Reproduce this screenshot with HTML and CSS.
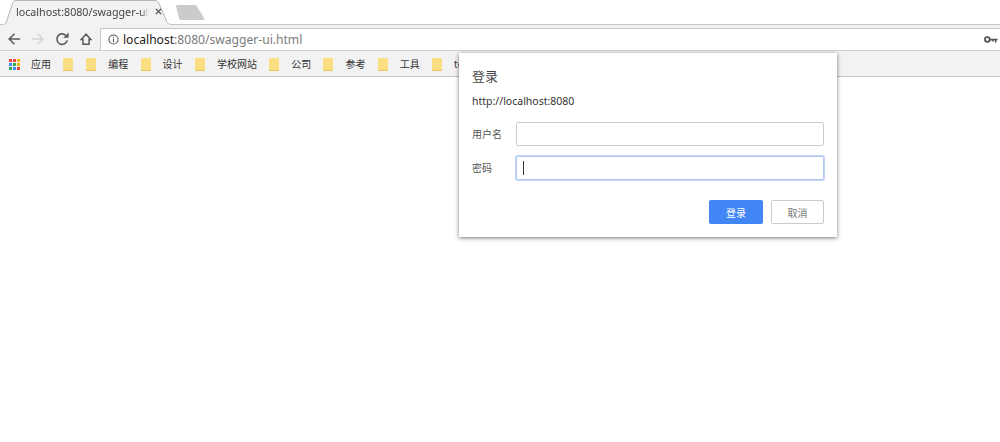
FILE: index.html
```html
<!DOCTYPE html>
<html lang="zh">
<head>
<meta charset="utf-8">
<title>localhost:8080/swagger-ui.html</title>
<link rel="stylesheet" href="styles.css">
</head>
<body>
<header class="chrome">
  <div class="tabstrip">
    <div class="tab">
      <svg class="tab-shape" width="176" height="26" viewBox="0 0 176 26"><path d="M0 24.500H3.500C5.500 24.500 6 23 7 20L12.500 3.500C13 1.500 14 .5 16 .5H155C157 .5 158 1.500 159 3.500L166.500 21C167.500 23.500 169 24.500 171 24.500H176V26H0Z" fill="#f2f2f2" stroke="#b5b5b5" stroke-width="1"/><path d="M0 25.500H176" stroke="#f2f2f2" stroke-width="1.500"/></svg>
      <span class="tab-title">localhost:8080/swagger-ui.html</span>
      <svg class="tab-close" width="7" height="7" viewBox="0 0 8 8"><path d="M1 1L7 7M7 1L1 7" stroke="#555" stroke-width="1.600"/></svg>
    </div>
    <svg class="newtab" width="30" height="15" viewBox="0 0 30 15"><path d="M1 1.500C1 .5 1.500 0 2.500 0H20C21 0 21.500 .5 22 1.500L29 13C29.500 14 29 15 28 15H6C5 15 4.500 14.500 4.200 13.500Z" fill="#cbcbcb"/></svg>
  </div>
  <div class="toolbar">
    <svg class="nav-icon nav-back" width="14" height="14" viewBox="0 0 16 16"><path d="M15 8H3M8.500 2L2.500 8L8.500 14" fill="none" stroke="#5a5a5a" stroke-width="1.800"/></svg>
    <svg class="nav-icon nav-forward" width="14" height="14" viewBox="0 0 16 16"><path d="M1 8H13M7.500 2L13.500 8L7.500 14" fill="none" stroke="#d4d4d4" stroke-width="1.800"/></svg>
    <svg class="nav-icon nav-reload" width="14" height="14" viewBox="0 0 16 16"><path d="M14 9.500A6 6 0 1 1 12.300 3.800" fill="none" stroke="#5a5a5a" stroke-width="1.800"/><path d="M9.500 6.500H15.500V.5Z" fill="#5a5a5a"/></svg>
    <svg class="nav-icon nav-home" width="14" height="14" viewBox="0 0 16 16"><path d="M8 2.500L2.500 8.500H4.500V14H11.500V8.500H13.500Z" fill="none" stroke="#5a5a5a" stroke-width="1.700"/></svg>
    <div class="omnibox">
      <svg class="info" width="11" height="11" viewBox="0 0 12 12"><circle cx="6" cy="6" r="5" fill="none" stroke="#555" stroke-width="1.100"/><path d="M6 5.200V9M6 3V4.200" stroke="#555" stroke-width="1.200"/></svg>
      <span class="url"><span class="host">localhost</span>:8080/swagger-ui.html</span>
      <svg class="key" width="14" height="8" viewBox="0 0 16 9"><circle cx="3.800" cy="4" r="2.700" fill="none" stroke="#555" stroke-width="2"/><path d="M6 3H15.500V5H14V7.500H12.500V5H11V6.500H9.500V5H6Z" fill="#555"/></svg>
    </div>
  </div>
  <nav class="bookmarks">
    <svg class="apps" width="11" height="11" viewBox="0 0 11 11">
      <rect x="0" y="0" width="3" height="3" fill="#e8453c"/><rect x="4" y="0" width="3" height="3" fill="#e8453c"/><rect x="8" y="0" width="3" height="3" fill="#f4b400"/>
      <rect x="0" y="4" width="3" height="3" fill="#4285f4"/><rect x="4" y="4" width="3" height="3" fill="#34a853"/><rect x="8" y="4" width="3" height="3" fill="#f4b400"/>
      <rect x="0" y="8" width="3" height="3" fill="#34a853"/><rect x="4" y="8" width="3" height="3" fill="#4285f4"/><rect x="8" y="8" width="3" height="3" fill="#e8453c"/>
    </svg>
    <span class="bm-label bm-apps">应用</span>
    <span class="folder"></span>
    <span class="folder folder-tight"></span><span class="bm-label">编程</span>
    <span class="folder"></span><span class="bm-label">设计</span>
    <span class="folder"></span><span class="bm-label">学校网站</span>
    <span class="folder"></span><span class="bm-label">公司</span>
    <span class="folder"></span><span class="bm-label">参考</span>
    <span class="folder"></span><span class="bm-label">工具</span>
    <span class="folder"></span><span class="bm-label">test</span>
  </nav>
</header>
<main class="page"></main>
<section class="dialog">
  <h1 class="dialog-title">登录</h1>
  <p class="dialog-origin">http://localhost:8080</p>
  <div class="field">
    <label class="field-label">用户名</label>
    <div class="input"></div>
  </div>
  <div class="field field-password">
    <label class="field-label">密码</label>
    <div class="input input-focus"><span class="caret"></span></div>
  </div>
  <div class="actions">
    <button class="btn btn-primary">登录</button>
    <button class="btn btn-cancel">取消</button>
  </div>
</section>
</body>
</html>
```
FILE: styles.css
```css
* { box-sizing: border-box; }
html, body { margin: 0; height: 100%; background: #fff; overflow: hidden; }
body { position: relative; font-family: "Noto Sans", "Noto Sans CJK SC", sans-serif; color: #333; }
.tabstrip { height: 25px; display: flex; align-items: flex-start; border-bottom: 1px solid #c4c4c4; padding-left: 3px; background: #fff; }
.tab { position: relative; width: 172px; height: 26px; flex: none; display: flex; align-items: center; padding: 0 0 3px 13px; }
.tab-shape { position: absolute; left: -3px; top: 0; }
.tab-title { position: relative; width: 133px; overflow: hidden; white-space: nowrap; font-size: 10.700px; color: #444; line-height: 24px; -webkit-mask-image: linear-gradient(90deg, #000 94%, transparent); mask-image: linear-gradient(90deg, #000 94%, transparent); }
.tab-close { position: relative; margin-left: 6px; }
.newtab { margin: 5px 0 0; flex: none; }
.toolbar { height: 26px; background: #f2f2f2; display: flex; align-items: center; padding-top: 3px; border-bottom: 1px solid #cfcfcf; }
.nav-icon { flex: none; }
.nav-back { margin-left: 7px; }
.nav-forward { margin-left: 10px; }
.nav-reload { margin-left: 10px; }
.nav-home { margin-left: 10px; }
.omnibox { margin-left: 7px; flex: 1; height: 22px; background: #fff; border: 1px solid #c6c6c6; border-width: 1px 0 0 1px; border-radius: 2px 0 0 0; display: flex; align-items: center; padding-left: 7px; }
.info { flex: none; }
.url { margin-left: 4px; font-size: 12.100px; color: #7b7b7b; flex: 1; line-height: 20px; }
.host { color: #222; }
.key { margin-right: 2px; }
.bookmarks { height: 26px; background: #f2f2f2; border-bottom: 1px solid #c9c9c9; display: flex; align-items: center; padding: 1px 0 0 9px; white-space: nowrap; overflow: hidden; }
.apps { flex: none; }
.bm-label { font-size: 10px; color: #333; margin-left: 12px; line-height: 14px; flex: none; }
.bm-apps { margin-left: 11px; }
.folder { width: 10px; height: 13px; flex: none; background: #fbdd82; border-radius: 1px; border-bottom: 1px solid #e9c661; margin-left: 12.300px; }
.folder-tight { margin-left: 13px; }
.page { height: 364px; background: #fff; }
.dialog { position: absolute; left: 459px; top: 53px; width: 378px; height: 184px; background: #fff; padding: 13px 13px 0; box-shadow: 0 1px 4px rgba(0,0,0,.55); display: flex; flex-direction: column; }
.dialog-title { margin: 0; font-size: 13px; font-weight: 400; line-height: 20px; color: #444; }
.dialog-origin { margin: 7px 0 0; font-size: 10.500px; line-height: 16px; color: #333; }
.field { display: flex; align-items: center; margin-top: 13px; }
.field-password { margin-top: 10px; }
.field-label { width: 44px; flex: none; font-size: 10px; color: #555; padding-bottom: 2px; }
.input { width: 308px; height: 24px; border: 1px solid #ccc; border-radius: 2px; background: #fff; display: flex; align-items: center; padding-left: 6px; }
.input-focus { border-color: #b3c9f3; box-shadow: 0 0 0 1px #c3d4f6; }
.caret { width: 1px; height: 14px; background: #333; }
.actions { display: flex; justify-content: flex-end; gap: 8px; margin-top: 20px; }
.btn { height: 24px; font: 10px "Noto Sans", "Noto Sans CJK SC", sans-serif; border-radius: 2px; padding: 0; }
.btn-primary { width: 54px; background: #4285f4; border: 0; color: #fff; }
.btn-cancel { width: 53px; background: #fff; border: 1px solid #ccc; color: #777; }
```
